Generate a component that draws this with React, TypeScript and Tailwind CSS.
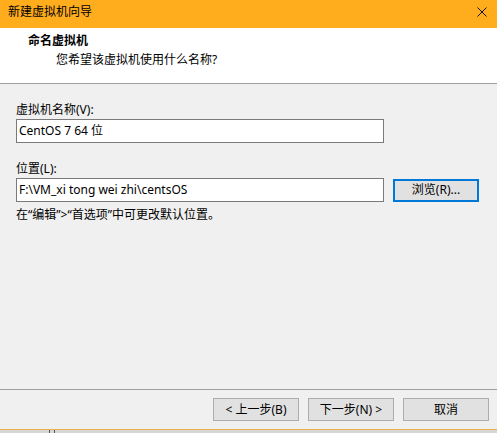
import React from 'react';

const font = "font-['Noto_Sans','Noto_Sans_CJK_SC',sans-serif]";

function WinButton({ label, focused }: { label: string; focused?: boolean }) {
  return (
    <div
      className={`w-[86px] h-[23px] flex items-center justify-center bg-[#e1e1e1] text-[12px] leading-none text-black ${
        focused ? 'border-2 border-[#0078d7]' : 'border border-[#adadad]'
      }`}
    >
      {label}
    </div>
  );
}

export default function App() {
  return (
    <div className={`w-[497px] h-[433px] bg-[#d6d6d6] flex flex-col ${font}`}>
      <div className="h-[430px] flex flex-col bg-[#f0f0f0] border-b border-[#e9b04c]">
        {/* title bar */}
        <div className="h-[28px] shrink-0 bg-[#ffac1d] flex items-center justify-between pl-[8px] pr-[10px]">
          <span className="text-[12px] leading-[16px] text-black -mt-[5px]">新建虚拟机向导</span>
          <svg width="10" height="10" viewBox="0 0 10 10" className="-mt-[4px]">
            <path d="M0.5 0.5 L9.5 9.5 M9.5 0.5 L0.5 9.5" stroke="#111" strokeWidth="1" />
          </svg>
        </div>

        {/* header */}
        <div className="h-[55px] shrink-0 bg-white pl-[28px] pt-[5px] flex flex-col">
          <span className="text-[12px] leading-[16px] font-bold text-black">命名虚拟机</span>
          <span className="text-[12px] leading-[16px] text-black pl-[28px] mt-[3px]">您希望该虚拟机使用什么名称?</span>
        </div>
        <div className="h-px shrink-0 bg-[#a0a0a0]" />

        {/* body */}
        <div className="flex-1 pl-[16px] pt-[18px] flex flex-col text-[12px] leading-[16px] text-black">
          <span>虚拟机名称(V):</span>
          <div className="mt-[1px] w-[368px] h-[24px] bg-white border border-[#7a7a7a] flex items-center pl-[2px]">
            CentOS 7 64 位
          </div>
          <span className="mt-[18px]">位置(L):</span>
          <div className="mt-[1px] flex items-center gap-[9px]">
            <div className="w-[368px] h-[24px] bg-white border border-[#7a7a7a] flex items-center pl-[2px]">
              F:\VM_xi tong wei zhi\centsOS
            </div>
            <WinButton label="浏览(R)..." focused />
          </div>
          <span className="mt-[5px]">在“编辑”&gt;“首选项”中可更改默认位置。</span>
        </div>

        {/* footer */}
        <div className="h-px shrink-0 bg-[#a0a0a0]" />
        <div className="h-[39px] shrink-0 flex items-start justify-end gap-[9px] pt-[8px] pr-[8px]">
          <WinButton label="< 上一步(B)" />
          <WinButton label="下一步(N) >" />
          <WinButton label="取消" />
        </div>
      </div>
      <div className="flex-1 flex">
        <div className="ml-[49px] w-px bg-[#555]" />
        <div className="ml-[4px] w-px bg-[#555]" />
      </div>
    </div>
  );
}
